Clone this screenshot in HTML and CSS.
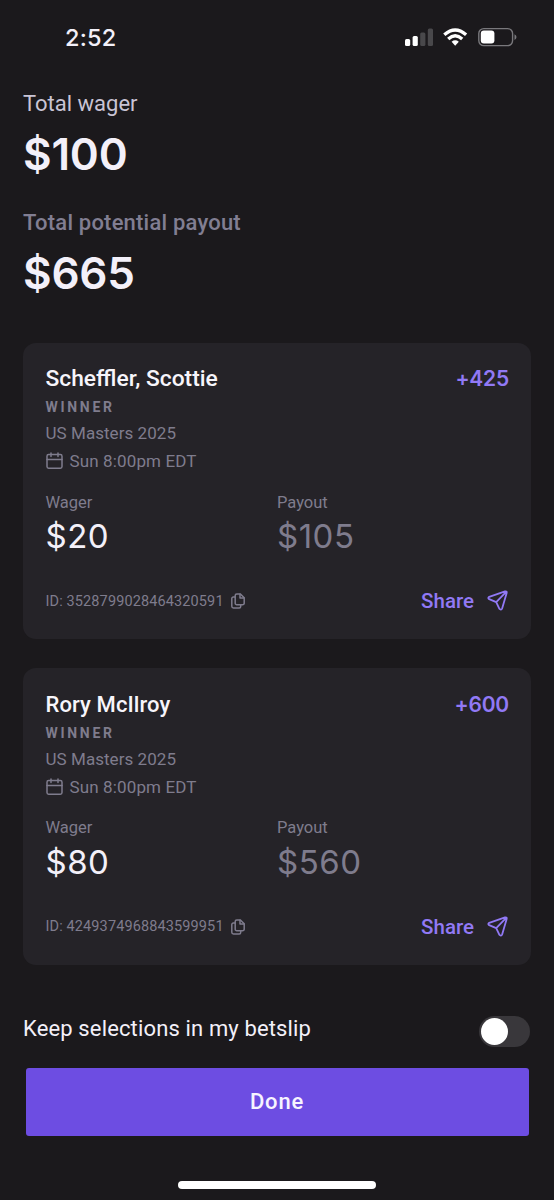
FILE: index.html
```
<!DOCTYPE html>
<html lang="en">
<head>
<meta charset="utf-8">
<title>Bet receipt</title>
<link rel="stylesheet" href="styles.css">
</head>
<body>
<svg class="defs" width="0" height="0" aria-hidden="true">
  <symbol id="calendar" viewBox="0 0 18 18"><g fill="none" stroke="currentColor" stroke-width="1.5" stroke-linecap="round" stroke-linejoin="round"><rect x="1" y="2.600" width="15" height="13.600" rx="1.6"/><path d="M1 7.4h15M5 .9v3.600M12 .9v3.600"/></g></symbol>
  <symbol id="copy" viewBox="0 0 14 16"><g fill="none" stroke="currentColor" stroke-width="1.5" stroke-linecap="round" stroke-linejoin="round"><path d="M5.8 1h3.6l3.8 3.8v5.4a1.6 1.6 0 0 1-1.6 1.6H5.8a1.6 1.6 0 0 1-1.6-1.6V2.6A1.6 1.6 0 0 1 5.8 1z"/><path d="M9 1.2v3.9h4M3.9 4H2.3A1.5 1.5 0 0 0 .8 5.500v7.700A1.700 1.700 0 0 0 2.500 14.900H8.200a1.500 1.500 0 0 0 1.500-1.500v-1.400"/></g></symbol>
  <symbol id="send" viewBox="0 0 22 22"><path d="M2.200 6.800 18 1.400Q20.300.9 19.600 3.200L15.200 18.300Q14 20.600 12.300 18.700L9.200 12.200 2.200 9.200Q.4 7.900 2.200 6.800zM9.200 12.200 19.200 1.900" fill="none" stroke="currentColor" stroke-width="1.800" stroke-linecap="round" stroke-linejoin="round"/></symbol>
</svg>
<header class="status">
  <span class="time">2:52</span>
  <svg class="signals" width="114" height="22" viewBox="0 0 114 22">
    <g fill="#fff"><rect x="0" y="13" width="5.200" height="7" rx="1.500"/><rect x="7.600" y="10" width="5.200" height="10" rx="1.500"/></g>
    <g fill="#49484b"><rect x="15.200" y="6.500" width="5.200" height="13.500" rx="1.500"/><rect x="22.800" y="2.500" width="5.200" height="17.500" rx="1.500"/></g>
    <g fill="none" stroke="#fff" stroke-width="3.300"><path d="M39.300 8.800Q50.200-.8 61.100 8.800"/><path d="M43.200 13Q50.200 6.600 57.200 13"/></g>
    <path d="M46.600 15.800Q50.200 12.900 53.800 15.800L50.200 19.800z" fill="#fff"/>
    <rect x="73.800" y="2.600" width="33.800" height="17" rx="5" fill="none" stroke="#79787c" stroke-width="1.400"/>
    <rect x="75.800" y="4.600" width="13.600" height="13" rx="3" fill="#fff"/>
    <path d="M109.500 8.200v5.800q2-.8 2-2.900t-2-2.900z" fill="#79787c"/>
  </svg>
</header>
<main>
  <section class="totals">
    <div class="label">Total wager</div>
    <div class="sum">$100</div>
    <div class="label payout-label">Total potential payout</div>
    <div class="sum">$665</div>
  </section>
  <article class="card">
    <div class="head"><span class="name">Scheffler, Scottie</span><span class="odds">+425</span></div>
    <div class="market">WINNER</div>
    <div class="event">US Masters 2025</div>
    <div class="date"><svg width="18" height="18"><use href="#calendar"/></svg><span>Sun 8:00pm EDT</span></div>
    <div class="money">
      <div><div class="caption">Wager</div><div class="amount">$20</div></div>
      <div><div class="caption">Payout</div><div class="amount muted">$105</div></div>
    </div>
    <div class="foot"><span class="id">ID: 3528799028464320591</span><svg width="14" height="16"><use href="#copy"/></svg><span class="share">Share</span><svg class="plane" width="22" height="22"><use href="#send"/></svg></div>
  </article>
  <article class="card">
    <div class="head"><span class="name short">Rory McIlroy</span><span class="odds">+600</span></div>
    <div class="market">WINNER</div>
    <div class="event">US Masters 2025</div>
    <div class="date"><svg width="18" height="18"><use href="#calendar"/></svg><span>Sun 8:00pm EDT</span></div>
    <div class="money">
      <div><div class="caption">Wager</div><div class="amount">$80</div></div>
      <div><div class="caption">Payout</div><div class="amount muted">$560</div></div>
    </div>
    <div class="foot"><span class="id">ID: 4249374968843599951</span><svg width="14" height="16"><use href="#copy"/></svg><span class="share">Share</span><svg class="plane" width="22" height="22"><use href="#send"/></svg></div>
  </article>
  <div class="keep"><span>Keep selections in my betslip</span><span class="toggle"><span class="knob"></span></span></div>
  <button class="done">Done</button>
</main>
<div class="home"></div>
</body>
</html>
```
FILE: styles.css
```
* { box-sizing: border-box; }
body {
  margin: 0;
  width: 554px;
  height: 1200px;
  overflow: hidden;
  background: #1b191c;
  color: #f3f0f9;
  font-family: Roboto, "Liberation Sans", sans-serif;
  white-space: nowrap;
  display: flex;
  flex-direction: column;
}
.defs { display: none; }
svg { display: block; flex: none; }
.status {
  height: 76px;
  padding: 26px 35px 0 65px;
  display: flex;
  justify-content: space-between;
}
.time { font: 500 23.500px/24px Inter, sans-serif; letter-spacing: .2px; }
main { padding: 0 23px; }
.totals { height: 266.500px; padding-top: 14px; }
.label { font-size: 22px; line-height: 28px; color: #c9c4d5; }
.sum { font: 600 44px/56px Inter, sans-serif; margin-top: 8px; letter-spacing: -.2px; }
.payout-label { margin-top: 27px; color: #817e92; font-weight: 500; letter-spacing: .2px; }
.card {
  height: 296.500px;
  padding: 22.500px 22px 0 22.500px;
  border-radius: 13px;
  background: #252328;
  color: #7f7c8d;
}
.card + .card { margin-top: 29px; }
.head { display: flex; justify-content: space-between; line-height: 28px; font-weight: 500; }
.name { font-size: 22.800px; color: #f7f5fb; }
.short { font-size: 22px; letter-spacing: .1px; }
.odds { font: 600 21px/27px Inter, sans-serif; letter-spacing: -.2px; color: #9179f5; }
.market { font-size: 14px; font-weight: 700; line-height: 28px; letter-spacing: 2.700px; }
.event { font-size: 17px; line-height: 25px; letter-spacing: .05px; }
.date { display: flex; align-items: center; gap: 6px; height: 30.500px; font-size: 17px; letter-spacing: .13px; }
.money { display: grid; grid-template-columns: 231.500px 1fr; margin-top: 14px; }
.caption { font-size: 16.500px; line-height: 24.500px; }
.amount { font: 400 33px/43px Inter, sans-serif; height: 44px; color: #f3f0f9; letter-spacing: .5px; }
.muted { color: #7f7c8d; }
.foot { display: flex; align-items: center; height: 44px; margin-top: 20px; }
.id { font-size: 14.500px; letter-spacing: .12px; margin-right: 7.500px; }
.share { margin-left: auto; font-size: 20.500px; font-weight: 500; color: #9179f5; }
.plane { margin-left: 13px; color: #9179f5; }
.keep {
  display: flex;
  justify-content: space-between;
  height: 62px;
  margin-top: 41px;
  padding-top: 10px;
  font-size: 22px;
  line-height: 26px;
  letter-spacing: .14px;
}
.toggle { width: 51px; height: 31px; margin-right: 1px; border-radius: 16px; background: #39373b; padding: 2px; }
.knob { display: block; width: 27px; height: 27px; border-radius: 50%; background: #fff; }
.done {
  display: block;
  width: 503px;
  height: 68px;
  margin: 0 2.500px;
  padding: 0;
  border: 0;
  border-radius: 3px;
  background: #6d4de2;
  color: #f7f4ff;
  font: 500 22px/68px Roboto, sans-serif;
  letter-spacing: .8px;
}
.home { width: 198px; height: 8px; margin: 45.500px 0 0 178px; border-radius: 4px; background: #fff; }
```
